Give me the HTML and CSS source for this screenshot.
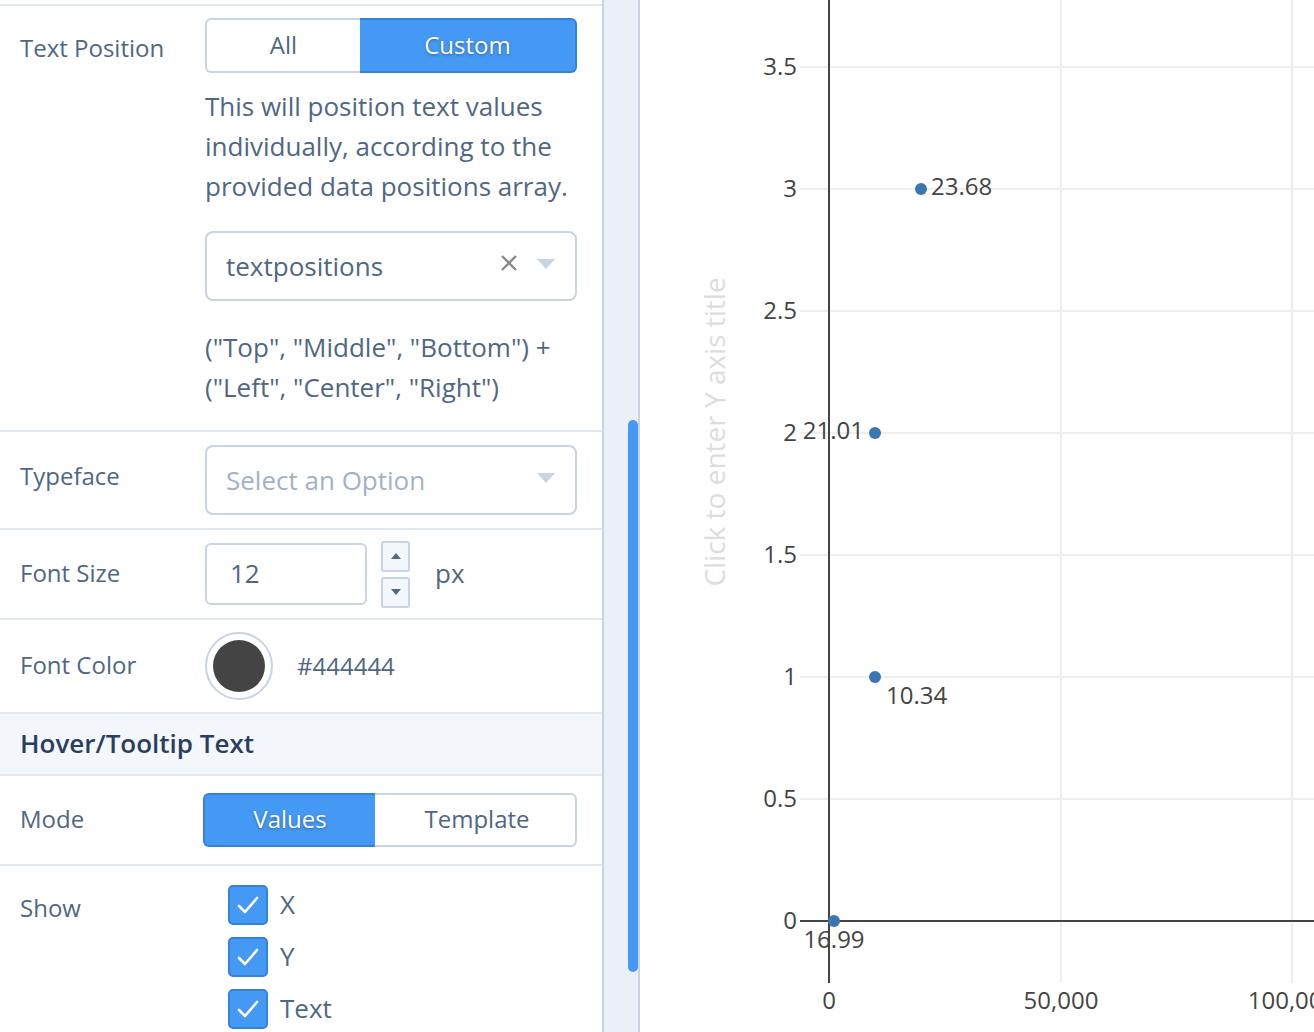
FILE: index.html
```html
<!DOCTYPE html>
<html lang="en">
<head>
<meta charset="utf-8">
<title>Trace style editor</title>
<link rel="stylesheet" href="styles.css">
</head>
<body>
<div class="app">
  <div class="panel">
    <div class="row row-tp">
      <div class="label label-tp">Text Position</div>
      <div class="field">
        <div class="toggle">
          <div class="seg seg-left seg-all">All</div>
          <div class="seg seg-right seg-on seg-custom">Custom</div>
        </div>
        <p class="desc">This will position text values individually, according to the provided data positions array.</p>
        <div class="select">
          <span class="sel-text">textpositions</span>
          <svg class="clear" width="18" height="18" viewBox="0 0 18 18"><path d="M2 2 L16 16 M16 2 L2 16" stroke="#8a8a8a" stroke-width="2.4" fill="none"/></svg>
          <span class="caret"></span>
        </div>
        <p class="desc hint">("Top", "Middle", "Bottom") + ("Left", "Center", "Right")</p>
      </div>
    </div>

    <div class="row row-typeface">
      <div class="label label-up">Typeface</div>
      <div class="field">
        <div class="select">
          <span class="sel-text placeholder">Select an Option</span>
          <span class="caret"></span>
        </div>
      </div>
    </div>

    <div class="row row-size">
      <div class="label">Font Size</div>
      <div class="field field-inline">
        <div class="num-input">12</div>
        <div class="stepper">
          <div class="step"><svg width="10" height="6" viewBox="0 0 10 6"><path d="M0 6 L5 0 L10 6 Z" fill="#506784"/></svg></div>
          <div class="step"><svg width="10" height="6" viewBox="0 0 10 6"><path d="M0 0 L5 6 L10 0 Z" fill="#506784"/></svg></div>
        </div>
        <span class="unit">px</span>
      </div>
    </div>

    <div class="row row-color">
      <div class="label">Font Color</div>
      <div class="field field-inline">
        <div class="swatch"><div class="swatch-fill"></div></div>
        <span class="hex">#444444</span>
      </div>
    </div>

    <div class="section-head">Hover/Tooltip Text</div>

    <div class="row row-mode">
      <div class="label">Mode</div>
      <div class="field">
        <div class="toggle toggle-mode">
          <div class="seg seg-left seg-on seg-values">Values</div>
          <div class="seg seg-right seg-template">Template</div>
        </div>
      </div>
    </div>

    <div class="row row-show">
      <div class="label label-show">Show</div>
      <div class="field">
        <div class="checks">
          <div class="check-item">
            <span class="checkbox"><svg width="26" height="26" viewBox="0 0 26 26"><path d="M4 14 L10 20 L22 6" stroke="#fff" stroke-width="2.6" fill="none" stroke-linecap="round" stroke-linejoin="round"/></svg></span>
            <span class="check-label">X</span>
          </div>
          <div class="check-item">
            <span class="checkbox"><svg width="26" height="26" viewBox="0 0 26 26"><path d="M4 14 L10 20 L22 6" stroke="#fff" stroke-width="2.6" fill="none" stroke-linecap="round" stroke-linejoin="round"/></svg></span>
            <span class="check-label">Y</span>
          </div>
          <div class="check-item">
            <span class="checkbox"><svg width="26" height="26" viewBox="0 0 26 26"><path d="M4 14 L10 20 L22 6" stroke="#fff" stroke-width="2.6" fill="none" stroke-linecap="round" stroke-linejoin="round"/></svg></span>
            <span class="check-label">Text</span>
          </div>
        </div>
      </div>
    </div>
  </div>

  <div class="gutter"><div class="scrollbar"></div></div>

  <div class="chart">
    <svg width="674" height="1032" viewBox="640 0 674 1032" class="plot">
      <g class="grid" stroke="#eeeeee" stroke-width="2">
        <line x1="800" y1="67" x2="1314" y2="67"/>
        <line x1="800" y1="189" x2="1314" y2="189"/>
        <line x1="800" y1="311" x2="1314" y2="311"/>
        <line x1="800" y1="433" x2="1314" y2="433"/>
        <line x1="800" y1="555" x2="1314" y2="555"/>
        <line x1="800" y1="677" x2="1314" y2="677"/>
        <line x1="800" y1="799" x2="1314" y2="799"/>
        <line x1="1061" y1="0" x2="1061" y2="983"/>
        <line x1="1292" y1="0" x2="1292" y2="983"/>
      </g>
      <g stroke="#444444" stroke-width="2">
        <line x1="800" y1="921" x2="1314" y2="921"/>
        <line x1="829" y1="0" x2="829" y2="983"/>
      </g>
      <g class="ticks" font-size="24" fill="#444444" text-anchor="end">
        <text x="797" y="75">3.5</text>
        <text x="797" y="197">3</text>
        <text x="797" y="319">2.5</text>
        <text x="797" y="441">2</text>
        <text x="797" y="563">1.5</text>
        <text x="797" y="685">1</text>
        <text x="797" y="807">0.5</text>
        <text x="797" y="929">0</text>
      </g>
      <g class="ticks" font-size="24" fill="#444444" text-anchor="middle">
        <text x="829" y="1009">0</text>
        <text x="1061" y="1009">50,000</text>
        <text x="1292" y="1009">100,000</text>
      </g>
      <text class="ytitle" transform="translate(725,432) rotate(-90)" text-anchor="middle" font-size="28" fill="#dddddd">Click to enter Y axis title</text>
      <g fill="#3a76b1">
        <circle cx="921" cy="189" r="6"/>
        <circle cx="875" cy="433" r="6"/>
        <circle cx="875" cy="677" r="6"/>
        <circle cx="834" cy="921" r="6"/>
      </g>
      <g class="ticks" font-size="24" fill="#444444">
        <text x="931" y="195">23.68</text>
        <text x="864" y="439" text-anchor="end">21.01</text>
        <text x="886" y="704">10.34</text>
        <text x="834" y="948" text-anchor="middle">16.99</text>
      </g>
    </svg>
  </div>
</div>
</body>
</html>
```

FILE: styles.css
```css
html, body {
  margin: 0;
  padding: 0;
  overflow: hidden;
  background: #ffffff;
}

body {
  font-family: "Open Sans", "Noto Sans", sans-serif;
  color: #506784;
}

.app {
  display: flex;
  width: 1314px;
  height: 1032px;
}

/* ---------- left panel ---------- */
.panel {
  width: 602px;
  flex: none;
  padding-top: 4px;
  box-sizing: border-box;
}

.row {
  display: flex;
  border-bottom: 2px solid #e2e8f0;
  box-sizing: border-box;
}

.row-tp {
  border-top: 2px solid #e2e8f0;
  padding: 12px 0 23px;
  align-items: flex-start;
}

.label {
  width: 205px;
  flex: none;
  box-sizing: border-box;
  padding-left: 20px;
  padding-bottom: 2px;
  font-size: 24px;
  line-height: 40px;
  color: #506784;
}

.label-tp { margin-top: 10px; }
.label-up { padding-bottom: 9px; }
.label-show { margin-top: 3px; }

.field {
  width: 372px;
  flex: none;
}

.field-inline {
  display: flex;
  align-items: center;
}

/* toggle buttons */
.toggle {
  display: flex;
  height: 55px;
}

.seg {
  box-sizing: border-box;
  display: flex;
  align-items: center;
  justify-content: center;
  padding-bottom: 3px;
  font-size: 24px;
  border: 2px solid #c8d4e3;
  background: #ffffff;
  color: #506784;
}

.seg-left { border-radius: 6px 0 0 6px; border-right: none; }
.seg-right { border-radius: 0 6px 6px 0; border-left: none; }

.seg-on {
  background: #4499f4;
  border-color: #3483da;
  color: #ffffff;
  text-shadow: 0 1px 3px rgba(0, 0, 0, 0.35);
}

.seg-all { width: 155px; }
.seg-custom { width: 217px; }

.toggle-mode {
  height: 54px;
  margin-left: -2px;
  width: 374px;
}

.seg-values { width: 172px; }
.seg-template { width: 202px; padding-left: 4px; }

/* descriptions */
.desc {
  margin: 13px 0 0;
  font-size: 26px;
  line-height: 40px;
  color: #506784;
}

.hint { margin-top: 26px; }

/* dropdown */
.select {
  box-sizing: border-box;
  height: 70px;
  margin-top: 25px;
  border: 2px solid #c8d4e3;
  border-radius: 8px;
  display: flex;
  align-items: center;
  padding: 0 20px 0 19px;
  background: #ffffff;
}

.sel-text {
  flex: 1;
  font-size: 26px;
  color: #506784;
}

.placeholder { color: #a2b1c6; }

.clear {
  margin-right: 19px;
  margin-top: -6px;
}

.caret {
  width: 0;
  height: 0;
  border-left: 9px solid transparent;
  border-right: 9px solid transparent;
  border-top: 10px solid #c8d4e3;
  margin-top: -4px;
}

.row-typeface {
  height: 98px;
  align-items: center;
}

.row-typeface .select { margin-top: 0; }

/* font size */
.row-size {
  height: 90px;
  align-items: center;
}

.num-input {
  box-sizing: border-box;
  width: 162px;
  height: 62px;
  border: 2px solid #c8d4e3;
  border-radius: 6px;
  font-size: 26px;
  line-height: 56px;
  padding-left: 23px;
  color: #506784;
}

.stepper {
  display: flex;
  flex-direction: column;
  gap: 5px;
  margin-left: 14px;
}

.step {
  box-sizing: border-box;
  width: 29px;
  height: 31px;
  border: 2px solid #c8d4e3;
  border-radius: 3px;
  background: #f3f6fa;
  display: flex;
  align-items: center;
  justify-content: center;
}

.unit {
  margin-left: 25px;
  margin-bottom: 3px;
  font-size: 26px;
  color: #506784;
}

/* font color */
.row-color {
  height: 94px;
  align-items: center;
}

.swatch {
  box-sizing: border-box;
  width: 68px;
  height: 68px;
  border-radius: 50%;
  border: 2px solid #c8d4e3;
  padding: 6px;
  background: #ffffff;
}

.swatch-fill {
  width: 100%;
  height: 100%;
  border-radius: 50%;
  background: #444444;
}

.hex {
  margin-left: 24px;
  margin-bottom: 2px;
  font-size: 24px;
  color: #506784;
}

/* section header */
.section-head {
  height: 62px;
  box-sizing: border-box;
  background: #f3f6fa;
  border-bottom: 2px solid #e2e8f0;
  padding-left: 20px;
  font-size: 26px;
  font-weight: 600;
  line-height: 58px;
  color: #2a3f5f;
}

/* mode */
.row-mode {
  height: 90px;
  align-items: center;
}

/* show */
.row-show {
  border-bottom: none;
  padding-top: 19px;
  align-items: flex-start;
}

.checks {
  padding-left: 23px;
  display: flex;
  flex-direction: column;
  gap: 12px;
}

.check-item {
  display: flex;
  align-items: center;
  height: 40px;
}

.checkbox {
  box-sizing: border-box;
  width: 40px;
  height: 40px;
  border-radius: 5px;
  background: #4499f4;
  border: 2px solid #3483da;
  display: flex;
  align-items: center;
  justify-content: center;
}

.check-label {
  margin-left: 12px;
  margin-bottom: 2px;
  font-size: 26px;
  color: #506784;
}

/* ---------- gutter ---------- */
.gutter {
  width: 34px;
  flex: none;
  background: #ebf0f8;
  border-left: 2px solid #c8d4e3;
  border-right: 2px solid #c8d4e3;
  position: relative;
}

.scrollbar {
  position: absolute;
  right: 0;
  top: 420px;
  width: 10px;
  height: 552px;
  border-radius: 5px;
  background: #4499f4;
}

/* ---------- chart ---------- */
.chart {
  flex: 1;
  background: #ffffff;
}

.plot {
  display: block;
  font-family: "Open Sans", "Noto Sans", sans-serif;
}
```
